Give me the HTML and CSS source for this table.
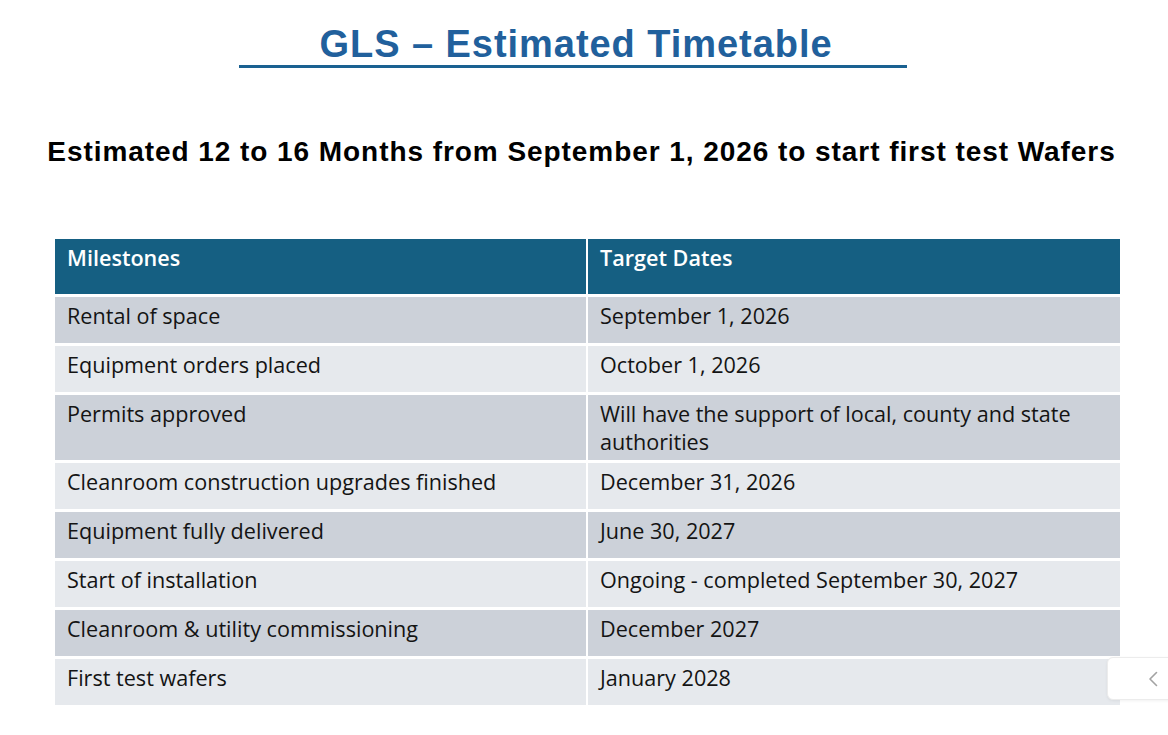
FILE: index.html
```html
<!DOCTYPE html>
<html lang="en">
<head>
<meta charset="utf-8">
<title>GLS – Estimated Timetable</title>
<link rel="stylesheet" href="styles.css">
</head>
<body>
<main class="slide">
  <h1 class="title">GLS – Estimated Timetable</h1>
  <h2 class="subtitle">Estimated 12 to 16 Months from September 1, 2026 to start first test Wafers</h2>
  <div class="table">
    <div class="cell head">Milestones</div>
    <div class="cell head">Target Dates</div>

    <div class="cell dark">Rental of space</div>
    <div class="cell dark">September 1, 2026</div>

    <div class="cell light">Equipment orders placed</div>
    <div class="cell light">October 1, 2026</div>

    <div class="cell dark">Permits approved</div>
    <div class="cell dark">Will have the support of local, county and state authorities</div>

    <div class="cell light">Cleanroom construction upgrades finished</div>
    <div class="cell light">December 31, 2026</div>

    <div class="cell dark">Equipment fully delivered</div>
    <div class="cell dark">June 30, 2027</div>

    <div class="cell light">Start of installation</div>
    <div class="cell light">Ongoing - completed September 30, 2027</div>

    <div class="cell dark">Cleanroom &amp; utility commissioning</div>
    <div class="cell dark">December 2027</div>

    <div class="cell light">First test wafers</div>
    <div class="cell light">January 2028</div>
  </div>
</main>
<button class="side-tab" aria-label="Open panel">
  <svg width="10" height="16" viewBox="0 0 10 16"><path d="M8.5 1.5 L2 8 L8.5 14.5" fill="none" stroke="#a3a3a3" stroke-width="1.6" stroke-linecap="round" stroke-linejoin="round"/></svg>
</button>
</body>
</html>
```
FILE: styles.css
```css
html, body {
  margin: 0;
  padding: 0;
  background: #ffffff;
}

.slide {
  width: 1168px;
  height: 735px;
  position: relative;
  overflow: hidden;
}

.title {
  margin: 0 0 0 239px;
  width: 668px;
  padding: 23px 0 0 6px;
  box-sizing: border-box;
  border-bottom: 3px solid #1a6191;
  font-family: "Liberation Sans", Arial, sans-serif;
  font-weight: 700;
  font-size: 38px;
  line-height: 42px;
  letter-spacing: 0.95px;
  color: #21609c;
  text-align: center;
}

.subtitle {
  margin: 68px 0 0 0;
  padding-right: 5px;
  font-family: "Liberation Sans", Arial, sans-serif;
  font-weight: 700;
  font-size: 28px;
  line-height: 32px;
  letter-spacing: 0.94px;
  color: #000000;
  text-align: center;
}

.table {
  margin: 71px 0 0 55px;
  width: 1065px;
  display: grid;
  grid-template-columns: 531px 532px;
  column-gap: 2px;
  row-gap: 3px;
  font-family: "Open Sans", "Noto Sans", sans-serif;
  font-size: 21.6px;
  line-height: 28px;
  color: #141414;
}

.cell {
  box-sizing: border-box;
  min-height: 46px;
  padding: 5px 12px 4px;
}

.head {
  min-height: 55px;
  background: #155f82;
  color: #ffffff;
  font-weight: 600;
}

.dark {
  background: #ccd1d9;
}

.light {
  background: #e6e9ed;
}

.side-tab {
  position: absolute;
  left: 1107px;
  top: 657px;
  width: 70px;
  height: 43px;
  padding: 0 0 0 40px;
  box-sizing: border-box;
  display: flex;
  align-items: center;
  background: #ffffff;
  border: 1px solid #ececec;
  border-radius: 6px 0 0 6px;
  box-shadow: 0 1px 3px rgba(0, 0, 0, 0.06);
  cursor: pointer;
}
```
